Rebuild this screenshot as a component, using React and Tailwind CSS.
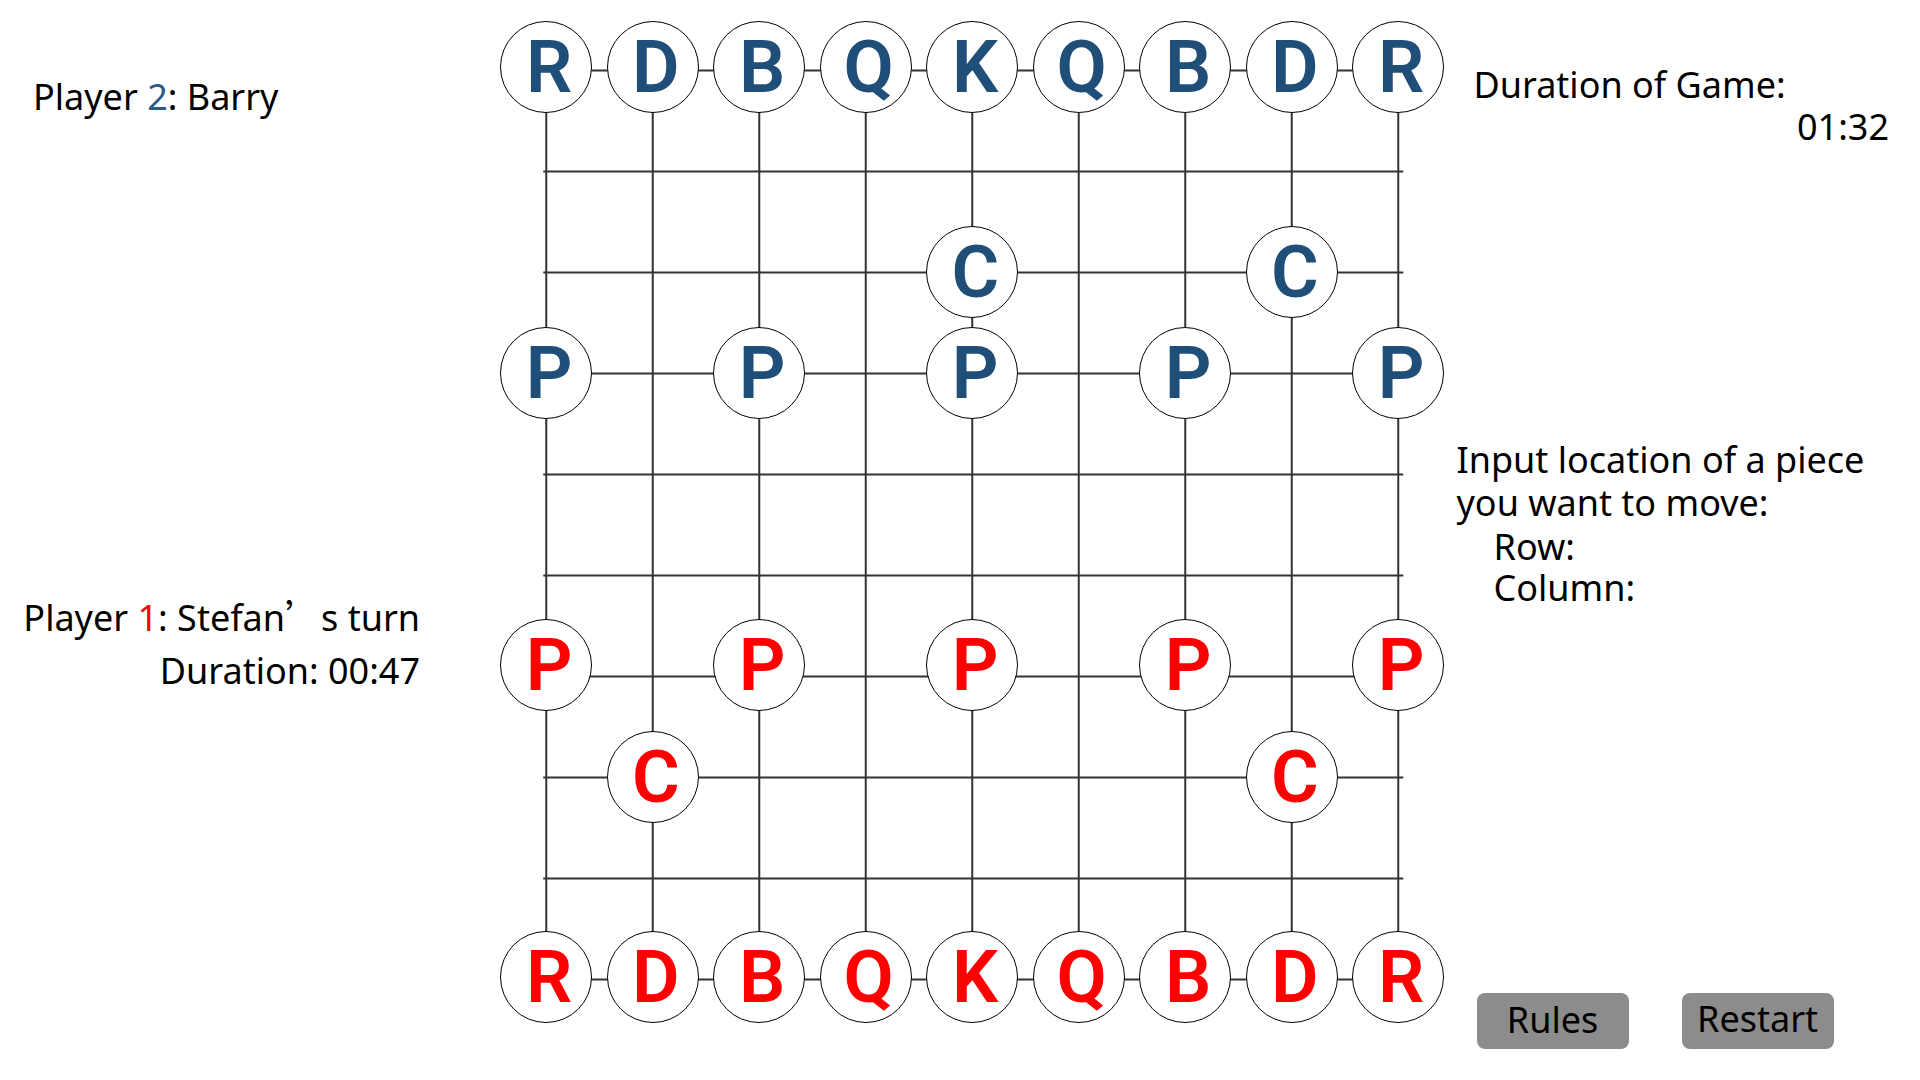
import React from "react";

// back rank, same for both sides
const BACK = ["R", "D", "B", "Q", "K", "Q", "B", "D", "R"];
const BLUE = "text-[#1f4e79]";
const RED = "text-[#ff0000]";

// board pieces keyed by "row-col"
const pieces = {};
BACK.forEach((ch, c) => {
  pieces[`0-${c}`] = { ch, color: BLUE };
  pieces[`9-${c}`] = { ch, color: RED };
});
[0, 2, 4, 6, 8].forEach((c) => {
  pieces[`3-${c}`] = { ch: "P", color: BLUE };
  pieces[`6-${c}`] = { ch: "P", color: RED };
});
pieces["2-4"] = { ch: "C", color: BLUE };
pieces["2-7"] = { ch: "C", color: BLUE };
pieces["7-1"] = { ch: "C", color: RED };
pieces["7-7"] = { ch: "C", color: RED };

const COL_W = 106.5;
const ROW_H = 101;

// small nudges seen in the screenshot
const rowShift = {
  0: "-translate-y-[3px]",
  6: "-translate-y-[11px]",
  9: "-translate-y-[2px]",
};

function Piece({ ch, color, row }) {
  return (
    <div
      className={`w-[92px] h-[92px] rounded-full border-[1.5px] border-black bg-white flex items-center justify-center ${rowShift[row] || ""}`}
    >
      <span className={`font-['Roboto',sans-serif] font-semibold text-[73px] leading-none pl-[6px] ${color}`}>
        {ch}
      </span>
    </div>
  );
}

function Board() {
  const xs = Array.from({ length: 9 }, (_, i) => COL_W / 2 + i * COL_W);
  const ys = Array.from({ length: 10 }, (_, i) => ROW_H / 2 + i * ROW_H);
  const cells = [];
  for (let r = 0; r < 10; r++) {
    for (let c = 0; c < 9; c++) {
      const p = pieces[`${r}-${c}`];
      cells.push(
        <div key={`${r}-${c}`} className="relative flex items-center justify-center">
          {p && <Piece ch={p.ch} color={p.color} row={r} />}
        </div>
      );
    }
  }
  return (
    <div className="relative grid grid-cols-[repeat(9,106.5px)] grid-rows-[repeat(10,101px)]">
      <svg className="absolute inset-0" width={COL_W * 9} height={ROW_H * 10}>
        {xs.map((x) => (
          <line key={`v${x}`} x1={x} y1={ys[0]} x2={x} y2={ys[9]} stroke="#333" strokeWidth="2" />
        ))}
        {ys.map((y) => (
          <line key={`h${y}`} x1={xs[0] - 3} y1={y} x2={xs[8] + 5} y2={y} stroke="#333" strokeWidth="2" />
        ))}
      </svg>
      {cells}
    </div>
  );
}

export default function App() {
  return (
    <div className="w-full h-[1080px] bg-white text-black flex font-['Noto_Sans',sans-serif] text-[36px]">
      {/* left: players */}
      <div className="w-[493px] shrink-0 flex flex-col">
        <div className="pl-[33px] pt-[79px] leading-[36px]">
          Player <span className="text-[#2a5a8a]">2</span>: Barry
        </div>
        <div className="mt-[474px] pr-[73px] text-right leading-[53px]">
          <div>
            Player <span className="text-[#ff0000]">1</span>: Stefan
            <span className="font-['Noto_Sans_CJK_SC',sans-serif]">’</span>s turn
          </div>
          <div>Duration: 00:47</div>
        </div>
      </div>

      {/* board */}
      <div className="w-[958.5px] shrink-0 pt-[19.5px]">
        <Board />
      </div>

      {/* right: timer, input, buttons */}
      <div className="flex-1 flex flex-col">
        <div className="pl-[22px] pr-[31px] pt-[64px] leading-[42px]">
          <div>Duration of Game:</div>
          <div className="text-right">01:32</div>
        </div>
        <div className="mt-[291px] pl-[5px] leading-[41px]">
          <div>Input location of a piece</div>
          <div className="mt-[2px]">you want to move:</div>
          <div className="mt-[3px] pl-[37px]">Row:</div>
          <div className="mt-[0px] pl-[37px]">Column:</div>
        </div>
        <div className="mt-auto pb-[31px] pl-[25px] flex gap-[53px]">
          <button className="w-[152px] h-[56px] rounded-lg bg-[#8c8c8c] flex items-center justify-center leading-[36px] pb-[3px]">
            Rules
          </button>
          <button className="w-[152px] h-[56px] rounded-lg bg-[#8c8c8c] flex items-center justify-center leading-[36px] pb-[5px]">
            Restart
          </button>
        </div>
      </div>
    </div>
  );
}
